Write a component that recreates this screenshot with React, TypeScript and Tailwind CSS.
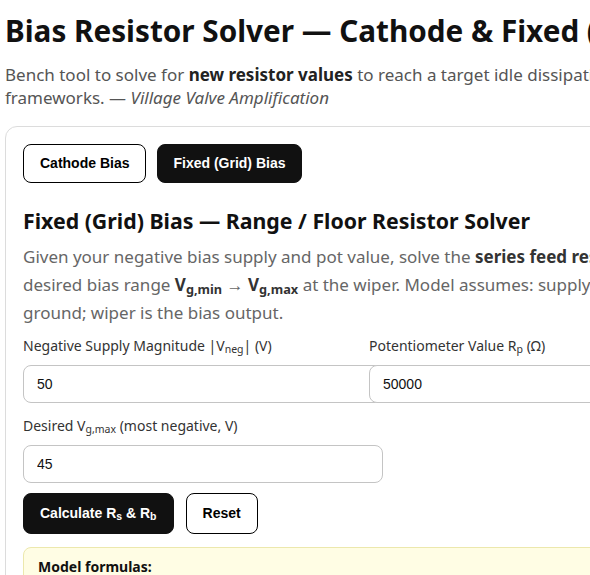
import React from "react";

const sans = { fontFamily: '"Noto Sans", sans-serif' };
const arial = { fontFamily: '"Liberation Sans", Arial, sans-serif' };

export default function App() {
  return (
    <div className="w-full overflow-hidden bg-white">
      <div className="w-[960px] px-[5px] pt-[12px] text-[#111]" style={sans}>
        <h1 className="whitespace-nowrap text-[29.7px] font-bold leading-[1.3] text-[#111]">
          Bias Resistor Solver — Cathode &amp; Fixed (Grid) Bias
        </h1>
        <p className="mt-[12px] whitespace-nowrap text-[17px] leading-[23px] text-[#555]">
          Bench tool to solve for <b className="text-[#222]">new resistor values</b> to reach a
          target idle dissipation using cathode and fixed bias
          <br />
          frameworks. — <i>Village Valve Amplification</i>
        </p>

        <div className="mt-[17px] rounded-[12px] border border-[#dcdcdc] p-[17px]">
          <div className="flex gap-[11px]" style={arial}>
            <button className="h-[39px] rounded-[8px] border border-black bg-white px-[16px] text-[14px] font-bold text-black">
              Cathode Bias
            </button>
            <button className="h-[39px] rounded-[8px] border border-[#111] bg-[#111] px-[15px] text-[14px] font-bold text-white">
              Fixed (Grid) Bias
            </button>
          </div>

          <h2 className="mt-[23px] whitespace-nowrap text-[21.3px] font-bold leading-[30px] text-[#111]">
            Fixed (Grid) Bias — Range / Floor Resistor Solver
          </h2>
          <p className="mt-[7px] whitespace-nowrap text-[17px] leading-[28px] text-[#666]">
            Given your negative bias supply and pot value, solve the{" "}
            <b className="text-[#333]">series feed resistor R<sub>s</sub></b> and{" "}
            <b className="text-[#333]">floor resistor R<sub>b</sub></b>
            <br />
            desired bias range{" "}
            <b className="text-[#333]">
              V<sub>g,min</sub>
            </b>{" "}
            →{" "}
            <b className="text-[#333]">
              V<sub>g,max</sub>
            </b>{" "}
            at the wiper. Model assumes: supply → R<sub>s</sub> → pot → R<sub>b</sub> →
            <br />
            ground; wiper is the bias output.
          </p>

          <div className="mt-[9px] grid grid-cols-[346px_346px]">
            <div className="flex flex-col">
              <label className="text-[14px] leading-[20px] text-[#333]">
                Negative Supply Magnitude |V<sub>neg</sub>| (V)
              </label>
              <input
                defaultValue="50"
                className="mt-[9px] h-[38px] w-[360px] rounded-[8px] border border-[#c4c4c4] bg-white px-[13px] text-[14px] text-[#111] outline-none"
                style={arial}
              />
            </div>
            <div className="flex flex-col">
              <label className="text-[14px] leading-[20px] text-[#333]">
                Potentiometer Value R<sub>p</sub> (Ω)
              </label>
              <input
                defaultValue="50000"
                className="mt-[9px] h-[38px] w-[360px] rounded-[8px] border border-[#c4c4c4] bg-white px-[13px] text-[14px] text-[#111] outline-none"
                style={arial}
              />
            </div>
          </div>

          <div className="mt-[13px] flex flex-col">
            <label className="text-[14px] leading-[20px] text-[#333]">
              Desired V<sub>g,max</sub> (most negative, V)
            </label>
            <input
              defaultValue="45"
              className="mt-[9px] h-[38px] w-[360px] rounded-[8px] border border-[#c4c4c4] bg-white px-[13px] text-[14px] text-[#111] outline-none"
              style={arial}
            />
          </div>

          <div className="mt-[10px] flex gap-[12px]" style={arial}>
            <button className="h-[41px] rounded-[8px] border border-[#111] bg-[#111] px-[16px] text-[14px] font-bold text-white">
              Calculate R<sub>s</sub> &amp; R<sub>b</sub>
            </button>
            <button className="h-[41px] rounded-[8px] border border-black bg-white px-[16px] text-[14px] font-bold text-black">
              Reset
            </button>
          </div>

          <div className="mt-[13px] rounded-[8px] border border-[#ece8ad] bg-[#fffde4] px-[14px] pb-[10px] pt-[9px]">
            <div className="text-[14px] font-bold leading-[20px] text-[#111]">Model formulas:</div>
            <div className="mt-[6px] text-[14px] leading-[22px] text-[#333]">
              V<sub>g,max</sub> = V<sub>neg</sub> · (R<sub>p</sub> + R<sub>b</sub>) / (R<sub>s</sub> + R<sub>p</sub> + R<sub>b</sub>)
            </div>
          </div>
        </div>
      </div>
    </div>
  );
}
